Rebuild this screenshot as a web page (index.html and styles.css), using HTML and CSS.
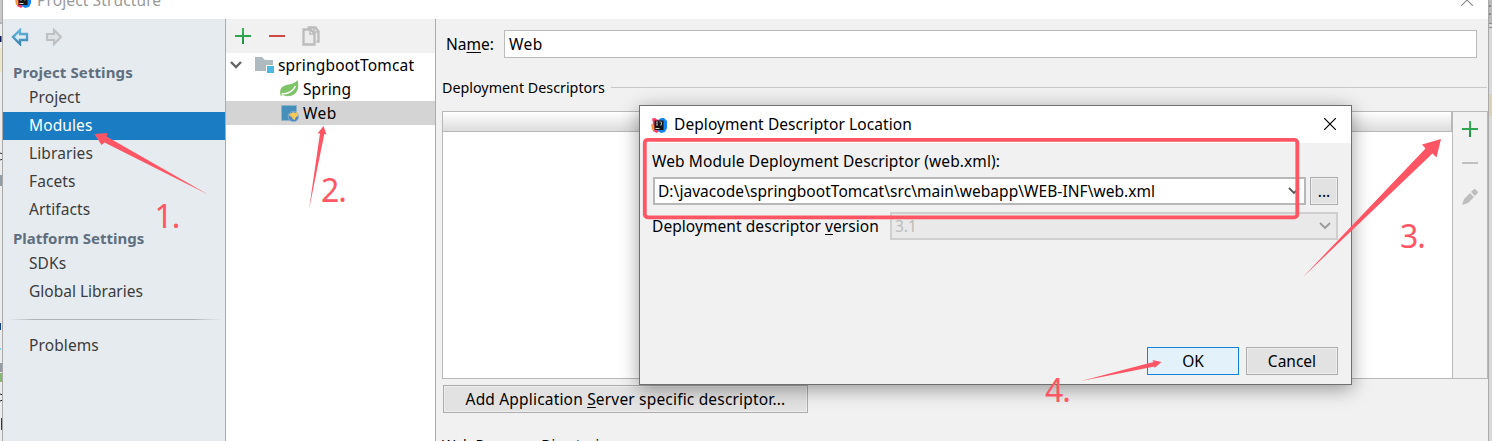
FILE: index.html
```html
<!DOCTYPE html>
<html lang="en">
<head>
<meta charset="utf-8">
<title>Project Structure</title>
<link rel="stylesheet" href="styles.css">
</head>
<body>
<svg class="defs" width="0" height="0">
  <defs>
    <linearGradient id="plus-fill" x1="0" y1="0" x2="0" y2="1"><stop offset="0" stop-color="#3cb75b"/><stop offset="1" stop-color="#1f9240"/></linearGradient>
    <linearGradient id="arrow-fill" x1="0" y1="0" x2="0" y2="1"><stop offset="0" stop-color="#65b5da"/><stop offset="1" stop-color="#3c86b5"/></linearGradient>
    <symbol id="idea" viewBox="0 0 16 16">
      <path d="M1 1.500L4 1l2 1.500L9 3v10l-3 3-4-2 1-3-2-2 1-3z" fill="#fc3b68"/>
      <path d="M0 7l3 1 1 4-3 1z" fill="#fb9340"/>
      <path d="M8 2.500L10 1h3l3 3v7l-2 4-4 1-3-2z" fill="#1686ef"/>
      <path d="M3.500 3.500h9v9.500h-9z" fill="#151515"/>
      <path d="M5 5h2M6 5v3M5 8h2M8.500 5h2v3h-1.500" stroke="#ccc" stroke-width=".8" fill="none"/>
      <path d="M4.500 11.500h4" stroke="#eee" stroke-width=".9"/>
    </symbol>
    <symbol id="plus" viewBox="0 0 16 16"><path d="M7 0h2v7h7v2H9v7H7V9H0V7h7z" fill="url(#plus-fill)"/></symbol>
  </defs>
</svg>
<div class="screen">
  <div class="edge edge-left">
    <svg width="3" height="441">
      <path d="M0 0h3v24H0z" fill="#c9c9c9"/><path d="M0 23h3" stroke="#999"/>
      <path d="M0 48h3v24H0z" fill="#ebe7c6"/>
      <path d="M0 36h1.500v6H0z" fill="#0b1a55"/>
      <path d="M0 153a3 3 0 0 1 0 7" stroke="#333" fill="none"/>
      <path d="M0 175h3v11H0z" fill="#929da5"/>
      <path d="M0 323h1v7H0z" fill="#174294"/><path d="M0 349h1" stroke="#3aa5d8"/><path d="M2 347h1v7H2z" fill="#a86527"/>
      <path d="M0 363h3v9H0z" fill="#929da5"/><path d="M0 373h3v9H0z" fill="#84b770"/>
      <path d="M0 394a3 3 0 0 1 0 7" stroke="#222" fill="none"/><path d="M1.500 418v12" stroke="#4a301c"/>
    </svg>
  </div>
  <div class="window">
    <div class="titlebar">
      <svg class="app-icon" width="16" height="16"><use href="#idea"/></svg>
      <span class="title-text">Project Structure</span>
      <svg class="title-close" width="12" height="12"><path d="M0 0l12 12M12 0L0 12" stroke="#888" stroke-width="1.100"/></svg>
    </div>
    <div class="content">
      <nav class="sidebar">
        <div class="history">
          <svg width="18" height="18" viewBox="0 0 18 18"><path d="M9 2v4h7v6H9v4L2 9z" fill="#dcebf2" stroke="url(#arrow-fill)" stroke-width="2.400"/></svg>
          <svg width="18" height="18" viewBox="0 0 18 18"><path d="M9 2v4H2v6h7v4l7-7z" fill="#dfe2e4" stroke="#bfc0c1" stroke-width="2.200"/></svg>
        </div>
        <div class="group"><span class="t-ps">Project Settings</span></div>
        <div class="item"><span>Project</span></div>
        <div class="item selected"><span>Modules</span></div>
        <div class="item"><span>Libraries</span></div>
        <div class="item"><span>Facets</span></div>
        <div class="item"><span>Artifacts</span></div>
        <div class="group"><span>Platform Settings</span></div>
        <div class="item"><span>SDKs</span></div>
        <div class="item"><span class="t-global">Global Libraries</span></div>
        <div class="separator"></div>
        <div class="item"><span>Problems</span></div>
      </nav>
      <section class="tree">
        <div class="tree-tools">
          <svg width="16" height="16"><use href="#plus"/></svg>
          <svg width="16" height="16"><path d="M0 7h16v2H0z" fill="#cc4a46"/></svg>
          <svg class="copy" width="18" height="20" viewBox="0 0 18 20"><path d="M5.500 1.500h8l3 4v10h-2M1.500 3.500h7l4 4v11h-11z" fill="#ececec" stroke="#bcbcbc" stroke-width="2.300"/><path d="M8 4v4h4M12 1v5h5" fill="none" stroke="#bcbcbc" stroke-width="1.500"/></svg>
        </div>
        <div class="node root">
          <svg class="chevron" width="12" height="8"><path d="M1 1l5 5 5-5" fill="none" stroke="#656565" stroke-width="2.300"/></svg>
          <svg width="19" height="18"><path d="M0 1h7l3 3h8v11H0z" fill="#aeb9c0"/><path d="M11 9h8v9h-8z" fill="#fff"/><path d="M12 10h7v7h-7z" fill="#4ab9e3"/></svg>
          <span class="t-root">springbootTomcat</span>
        </div>
        <div class="node leaf">
          <svg width="19" height="18"><path d="M17.500 0c1.800 6 .8 13-5.500 15.500-3.800 1-7 .8-9.500-.5L.8 16c-1.600-4-.4-8.500 3-10 5-2.200 10-1 13.700-6z" fill="#7fc36a"/><path d="M1.500 14c5.500 0 11-1.500 14-8" fill="none" stroke="#fff" stroke-width="1.400"/></svg>
          <span class="t-spring">Spring</span>
        </div>
        <div class="node leaf chosen">
          <svg width="19" height="18"><path d="M1 1h16v16H1z" fill="#8fb4ca"/><path d="M2 2h14v14H2z" fill="#468fba"/><circle cx="13.500" cy="12.500" r="5.300" fill="#4d87c5" stroke="#a8c3d8" stroke-width=".6"/><path d="M9.500 10l4-2 1.500 1 2-1 1.300 4-2.300 1-1.500 3-2-1-.5-2-2.500-1z" fill="#f4c95a"/></svg>
          <span class="t-web">Web</span>
        </div>
      </section>
      <main class="details">
        <div class="name-row"><label>Na<u>m</u>e:</label><div class="name-input"><span class="t-web">Web</span></div></div>
        <div class="section-title"><span>Deployment Descriptors</span><i></i></div>
        <div class="table">
          <div class="grid"><div class="grid-head"></div></div>
          <div class="table-tools">
            <svg width="16" height="16"><use href="#plus"/></svg>
            <svg width="16" height="16"><path d="M0 7h16v2H0z" fill="#c0c0c0"/></svg>
            <svg width="16" height="16"><path d="M0 16l2-6 6-6 4 4-6 6zM9 3l2.500-2.500q1-1 2.500.3l1.300 1.300q1.300 1.400 0 2.500L13 7z" fill="#bebebe"/></svg>
          </div>
        </div>
        <div class="button add-button"><span class="t-add">Add Application <u>S</u>erver specific descriptor...</span></div>
        <div class="section-title next-section"><span>Web Resource Directories</span></div>
      </main>
    </div>
  </div>
  <div class="edge edge-right">
    <svg width="3" height="441"><path d="M0 0h3v24H0z" fill="#bbb"/><path d="M0 6h2M0 14h2" stroke="#555"/><path d="M0 23.500h3M0 27.500h3" stroke="#888"/><path d="M0 94h3v22H0z" fill="#d9d0b5"/></svg>
  </div>

  <div class="dialog">
    <div class="dialog-title">
      <svg width="16" height="16"><use href="#idea"/></svg>
      <span class="t-ddl">Deployment Descriptor Location</span>
      <svg class="dialog-close" width="12" height="12"><path d="M0 0l12 12M12 0L0 12" stroke="#000" stroke-width="1.200"/></svg>
    </div>
    <div class="dialog-body">
      <div class="path-label"><span class="t-wmdd">Web Module Deployment Descriptor (web.xml):</span></div>
      <div class="path-row">
        <div class="combo"><span class="t-path">D:\javacode\springbootTomcat\src\main\webapp\WEB-INF\web.xml</span><svg width="12" height="8"><path d="M1 1l5 5 5-5" fill="none" stroke="#555" stroke-width="1.800"/></svg></div>
        <div class="button browse"><span>...</span></div>
      </div>
      <div class="version-row">
        <span class="t-ver">Deployment descriptor <u>v</u>ersion</span>
        <div class="combo disabled"><span>3.1</span><svg width="12" height="8"><path d="M1 1l5 5 5-5" fill="none" stroke="#999" stroke-width="1.800"/></svg></div>
      </div>
      <div class="actions"><div class="button primary"><span>OK</span></div><div class="button"><span>Cancel</span></div></div>
    </div>
  </div>

  <svg class="annotations" width="1492" height="441">
    <rect x="644.800" y="139.800" width="652.500" height="77.500" rx="3" fill="none" stroke="#ff5564" stroke-width="3.800"/>
    <g fill="#ff5564">
      <path d="M94.500 134L107.500 133 106.500 136.500 208 194.500 104.500 142.500 101.500 145z"/>
      <path d="M323.500 126L326.500 134.500 324.300 134 309 209.500 320 133.300 317.500 133.500z"/>
      <path d="M1441 139L1436.500 157.500 1432.500 153.500 1303 277 1425.500 148.500 1422 144.500z"/>
      <path d="M1161.500 362L1154.500 368 1154.500 366.500 1081 381 1153.500 362 1152.500 360z"/>
    </g>
    <g class="numbers">
      <text x="154.500" y="227.500">1.</text><text x="321" y="202">2.</text><text x="1400" y="247.500">3.</text><text x="1045" y="401.500">4.</text>
    </g>
  </svg>
</div>
</body>
</html>
```
FILE: styles.css
```css
* { box-sizing: border-box; }
body { margin: 0; font: 15.5px/20px "Noto Sans", "Open Sans", sans-serif; color: #000; }
svg { display: block; flex: none; }
span, label { white-space: nowrap; }
u { text-decoration: underline; text-underline-offset: 2px; text-decoration-thickness: 1px; }
.defs { position: absolute; }
.screen { position: relative; display: flex; width: 1492px; height: 441px; overflow: hidden; background: #f1f1f1; }
.edge { flex: none; overflow: hidden; }
.edge-left { width: 2px; background: #ececec; }
.edge-right { width: 3px; background: #d9d9d9; }
.window { display: flex; flex-direction: column; width: 1487px; height: 441px; border: solid #a9a9a9; border-width: 0 1px; }
.titlebar { display: flex; align-items: flex-start; flex: none; height: 19px; padding-left: 12px; background: #fff; color: #999; overflow: hidden; }
.app-icon { margin-top: -8px; }
.title-text { margin: -10px auto 0 6px; letter-spacing: .12px; }
.title-close { margin: -6px 15px 0 0; }
.content { display: flex; flex: 1; min-height: 0; }
.sidebar { flex: none; width: 223px; background: #e6ebef; border-right: 1px solid #ababab; color: #3c3c3c; }
.history { display: flex; gap: 16px; height: 39px; padding: 9px 0 0 8px; }
.group { display: flex; align-items: center; height: 26px; padding: 1px 0 0 10px; font-size: 15px; font-weight: 700; color: #5f6f7f; }
.t-ps { letter-spacing: .1px; }
.item { display: flex; align-items: center; height: 28px; padding: 0 0 2px 26px; letter-spacing: .1px; }
.t-global { letter-spacing: 0; }
.item.selected { background: #1a7dc4; color: #fff; }
.separator { height: 1px; margin: 13px 4px 12px 6px; background: linear-gradient(90deg, transparent, #adb1b3 12%, #adb1b3 86%, transparent); }
.tree { flex: none; width: 210px; background: #fff; border-right: 1px solid #ababab; }
.tree-tools { display: flex; align-items: center; gap: 18px; height: 34px; padding-left: 9px; background: #f1f1f1; }
.copy { margin-left: -1px; }
.node { display: flex; align-items: center; height: 24px; }
.root { padding-left: 4px; gap: 5px; }
.root .chevron { margin-right: 8px; }
.t-root { margin-left: -1px; letter-spacing: .17px; }
.t-spring { letter-spacing: .1px; }
.t-web { letter-spacing: .4px; }
.leaf { padding-left: 54px; gap: 4px; }
.chosen { background: #d4d4d4; }
.details { flex: 1; min-width: 0; background: #f1f1f1; padding: 11px 0 0 6px; }
.name-row { display: flex; align-items: center; justify-content: space-between; height: 28px; padding: 0 11px 0 4px; }
.name-input { display: flex; align-items: center; width: 973px; height: 28px; padding-left: 4px; background: #fff; border: 1px solid #bbb; }
.section-title { display: flex; align-items: center; height: 20px; margin: 21px 0 12px; padding-right: 1px; font-size: 14.3px; }
.section-title span { margin-top: -2px; }
.section-title i { flex: 1; height: 1px; margin: -3px 0 0 6px; background: #c8c8c8; }
.table { display: flex; height: 268px; border: 1px solid #b8b8b8; }
.grid { flex: 1; background: #fff; }
.grid-head { height: 20px; border: solid #b8b8b8; border-width: 0 1px 1px 0; background: linear-gradient(#fff, #dcdcdc); }
.table-tools { width: 35px; padding: 9px 0 0 9px; border-left: 1px solid #b8b8b8; display: flex; flex-direction: column; gap: 18px; }
.button { display: flex; align-items: center; justify-content: center; flex: none; width: 92px; height: 28px; padding-bottom: 1px; border: 1px solid #adadad; box-shadow: inset 0 0 0 1px #eee; background: #e2e2e2; }
.add-button { width: 365px; margin: 6px 0 0 1px; }
.t-add { letter-spacing: .18px; }
.next-section { margin-top: 23px; }
.dialog { position: absolute; left: 639px; top: 105px; width: 713px; height: 280px; display: flex; flex-direction: column; background: #f1f1f1; border: 1px solid #707070; box-shadow: 0 4px 18px rgba(0,0,0,.38); }
.dialog-title { display: flex; align-items: center; flex: none; height: 37px; padding: 0 15px 0 11px; background: #fff; }
.dialog-title span { margin: -2px auto 0 7px; letter-spacing: .08px; }
.dialog-close { margin-top: -1px; }
.dialog-body { display: flex; flex: 1; flex-direction: column; padding: 8px 13px 9px; }
.path-label { height: 26px; margin-left: -1px; }
.t-wmdd { letter-spacing: .1px; }
.path-row { display: flex; gap: 4px; }
.combo { display: flex; align-items: center; justify-content: space-between; width: 653px; height: 28px; padding: 0 4px 0 3px; border: 2px solid #b8b8b8; background: #fff; }
.t-path { letter-spacing: .05px; }
.browse { width: 28px; }
.version-row { display: flex; align-items: center; justify-content: space-between; margin-top: 7px; }
.t-ver { margin-left: -1px; letter-spacing: .07px; }
.combo.disabled { width: 448px; background: #e9e9e9; border-color: #cfcfcf; color: #bbb; padding: 0 5px 0 3px; }
.actions { display: flex; justify-content: flex-end; gap: 7px; margin-top: auto; }
.primary { background: #e2f1fa; border-color: #1683d8; box-shadow: none; }
.annotations { position: absolute; left: 0; top: 0; }
.numbers { font: 32px "Noto Sans", sans-serif; letter-spacing: -1px; fill: #ff5564; }
```
